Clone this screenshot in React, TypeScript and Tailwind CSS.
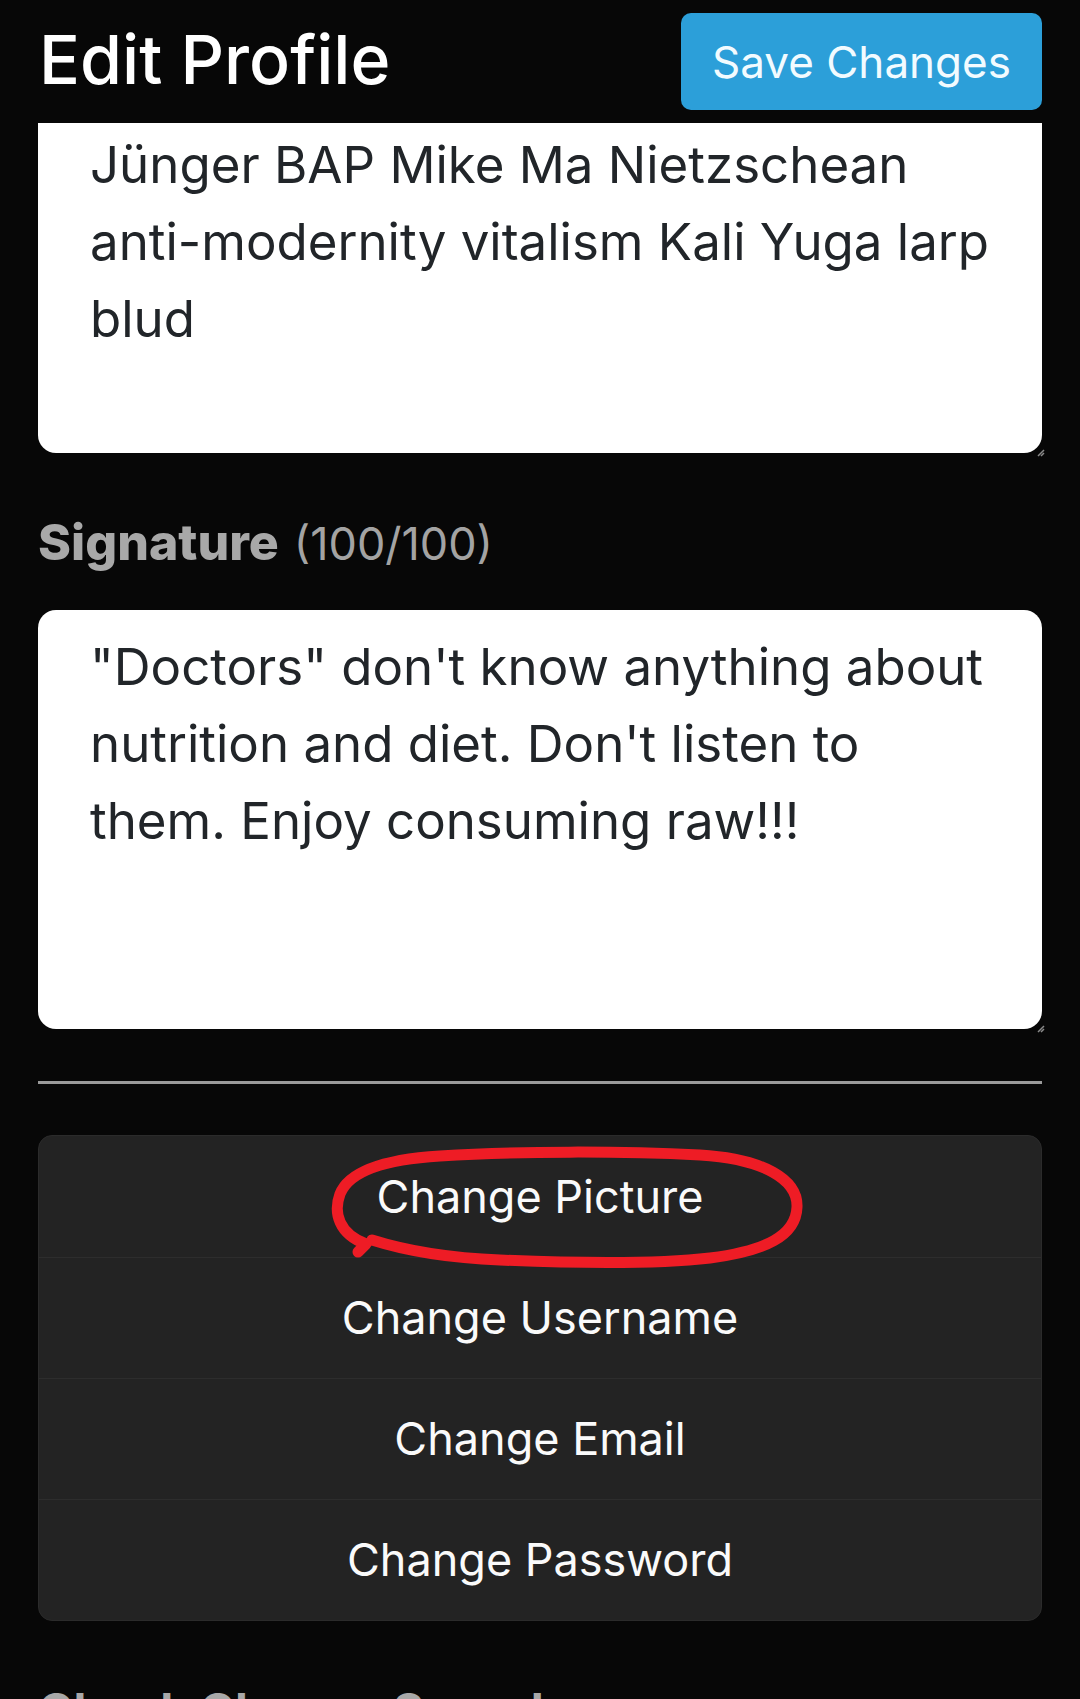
import React from 'react';

const bioLines = [
  'Jünger BAP Mike Ma Nietzschean',
  'anti-modernity vitalism Kali Yuga larp',
  'blud',
];

const signatureLines = [
  '"Doctors" don\'t know anything about',
  "nutrition and diet. Don't listen to",
  'them. Enjoy consuming raw!!!',
];

const actions = ['Change Picture', 'Change Username', 'Change Email', 'Change Password'];

const ResizeGrip: React.FC = () => (
  <svg className="absolute right-[-3px] bottom-[-4px]" width="8" height="8" viewBox="0 0 8 8">
    <path d="M1 7 L7 1 M4 7 L7 4" stroke="#8a8a8a" strokeWidth="1.5" />
  </svg>
);

export default function App() {
  return (
    <div className="relative h-[1699px] overflow-hidden bg-[#070707] font-['Inter',sans-serif]">
      <header className="flex items-start justify-between h-[123px] pl-[39px] pr-[38px] pt-[13px]">
        <h1 className="mt-[12px] text-[68px] leading-none font-medium text-white">Edit Profile</h1>
        <button className="h-[97px] w-[361px] rounded-[10px] bg-[#2c9fd9] text-[44px] text-[#f2fbff] leading-none">
          Save Changes
        </button>
      </header>

      {/* bio field, scrolled under the header */}
      <div className="relative mx-[38px] h-[330px] rounded-b-[18px] bg-white pl-[52px] pt-[3px]">
        {bioLines.map((l) => (
          <div key={l} className="whitespace-nowrap text-[51px] leading-[77px] text-[#212529]">
            {l}
          </div>
        ))}
        <ResizeGrip />
      </div>

      <div className="mx-[38px] mt-[64px] flex items-baseline whitespace-nowrap leading-none">
        <span className="text-[50px] font-extrabold text-[#a8a8a8]">Signature</span>
        <span className="ml-[15px] text-[45px] text-[#a3a3a3]">(100/100)</span>
      </div>

      <div className="relative mx-[38px] mt-[43px] h-[419px] rounded-[18px] bg-white pl-[52px] pt-[18px]">
        {signatureLines.map((l) => (
          <div key={l} className="whitespace-nowrap text-[51px] leading-[77px] text-[#212529]">
            {l}
          </div>
        ))}
        <ResizeGrip />
      </div>

      <div className="mx-[38px] mt-[52px] h-[3px] bg-[#9a9a9a]" />

      <div className="mx-[38px] mt-[51px] overflow-hidden rounded-[14px] border border-[#2b2b2b] bg-[#232323]">
        {actions.map((a, i) => (
          <div
            key={a}
            className={`flex h-[121px] items-center justify-center text-[45px] text-[#fafafa] ${
              i > 0 ? 'border-t border-[#2d2d2d]' : ''
            }`}
          >
            {a}
          </div>
        ))}
      </div>

      <div className="mx-[38px] mt-[66px] whitespace-nowrap text-[48px] leading-none font-bold text-[#a8a8a8]">
        Check Change Sounds
      </div>

      {/* red hand-drawn annotation */}
      <svg
        className="pointer-events-none absolute left-0 top-0"
        width="1080"
        height="1699"
        viewBox="0 0 1080 1699"
      >
        <path
          d="M358 1252 L366 1244 C339 1234 333 1213 340 1194 C350 1169 390 1159 440 1156 C520 1151 620 1151 700 1155 C765 1159 798 1180 797 1207 C796 1236 765 1251 710 1258 C650 1265 570 1263 500 1260 C450 1258 410 1252 372 1240"
          fill="none"
          stroke="#ee1c25"
          strokeWidth="11"
          strokeLinecap="round"
          strokeLinejoin="round"
        />
      </svg>
    </div>
  );
}
